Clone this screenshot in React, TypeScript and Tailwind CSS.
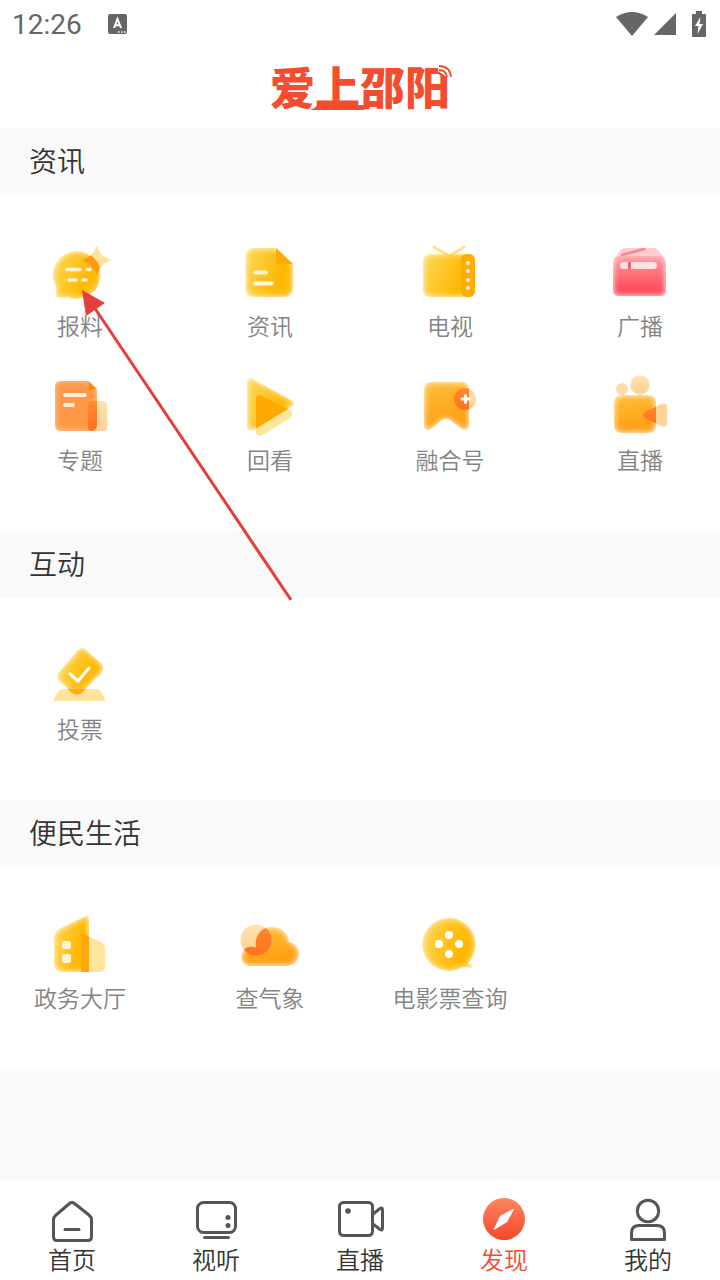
import React from 'react';

type Item = { label: string; icon: React.ReactNode };
type Section = { title: string; items: Item[] };

// Gradients and the soft edge filter shared by the channel icons
const SharedDefs = () => (
  <svg className="absolute w-0 h-0" aria-hidden="true">
    <defs>
      <linearGradient id="yellow" x1="0" y1="0" x2="1" y2="0.35">
        <stop offset="0" stopColor="#fcd95c" />
        <stop offset="0.8" stopColor="#ffb905" />
      </linearGradient>
      <linearGradient id="amber" x1="0" y1="0" x2="0.2" y2="1">
        <stop offset="0" stopColor="#ffbf3a" />
        <stop offset="0.9" stopColor="#ffa014" />
      </linearGradient>
      <linearGradient id="orange" x1="0" y1="0" x2="0" y2="1">
        <stop offset="0" stopColor="#ff9350" />
        <stop offset="1" stopColor="#ff9a42" />
      </linearGradient>
      <linearGradient id="pink" x1="0" y1="0" x2="0" y2="1">
        <stop offset="0" stopColor="#ff9a9f" />
        <stop offset="1" stopColor="#fb3f4e" />
      </linearGradient>
      <linearGradient id="peach" x1="0" y1="0" x2="0" y2="1">
        <stop offset="0" stopColor="#ffe3b0" />
        <stop offset="1" stopColor="#ffd094" />
      </linearGradient>
      <linearGradient id="deep" x1="0" y1="0" x2="0" y2="1">
        <stop offset="0" stopColor="#ff8a2a" />
        <stop offset="1" stopColor="#ff7120" />
      </linearGradient>
      <linearGradient id="active" x1="0" y1="0" x2="0" y2="1">
        <stop offset="0" stopColor="#ff8660" />
        <stop offset="1" stopColor="#f2482b" />
      </linearGradient>
      <filter id="soft" x="-10%" y="-10%" width="120%" height="120%" colorInterpolationFilters="sRGB">
        <feGaussianBlur in="SourceAlpha" stdDeviation="3" result="blur" />
        <feComposite in="SourceGraphic" in2="blur" operator="in" />
      </filter>
    </defs>
  </svg>
);

const Icon = ({ children }: { children: React.ReactNode }) => (
  <svg viewBox="0 0 72 72" className="size-[72px]" fill="none" aria-hidden="true">
    {children}
  </svg>
);

const STAR = 'M53 10C55 18 58 22 68 25C58 29 55 33 53 40C50 33 47 29 38 25C47 22 50 18 53 10Z';
const PLAY = 'M13 13C13 9 16 8 19 10L57 31C61 33 61 36 57 38L20 61C16 63 13 61 13 58Z';
const PLAY_BACK = 'M22 30C22 26 25 25 28 27L56 41C60 43 59 47 56 49L29 66C25 68 22 66 22 63Z';
const BOOKMARK = 'M17 13H48Q55 13 55 20V57C55 61 51 62 48 60L36 51Q32 48 28 51L17 60C14 62 10 61 10 57V20Q10 13 17 13Z';
const LENS = 'M41 43L57 35Q63 33 63 38V54Q63 59 57 57L41 49Q37 46 41 43Z';
const DIAMOND = 'M34 12Q38 8 42 12L57 25Q61 29 58 34L39 54Q33 59 28 55L15 43Q11 38 15 34Z';
const TOWER = 'M17 21L42 9Q45 8 45 11V65H19Q10 65 10 56V31Q10 24 17 21Z';
const ANNEX = 'M37 26L57 35Q61 37 61 41V59Q61 65 55 65H37Z';
const CLOUD = 'M16 59C4 58 5 42 15 40Q19 39 22 41C20 28 28 20 38 20C48 20 54 26 55 35C69 37 68 59 53 59Z';

const TipIcon = () => (
  <Icon>
    <clipPath id="tip-clip"><circle cx="33" cy="40" r="24" /></clipPath>
    <path d={STAR} fill="#ffe29a" />
    <path d="M33 16A24 24 0 1 1 23 62Q17 64 11 62Q13 57 12 52A24 24 0 0 1 33 16Z" fill="url(#yellow)" filter="url(#soft)" />
    <path d={STAR} fill="#ff9812" clipPath="url(#tip-clip)" />
    <path d="M23 34.5h13M43 34.5h3M25 45h7M39 45h3" stroke="#fff4da" strokeWidth="3.6" strokeLinecap="round" />
  </Icon>
);

const NewsIcon = () => (
  <Icon>
    <path d="M20 13H42L59 29V53Q59 62 50 62H20Q11.5 62 11.5 53V21Q11.5 13 20 13Z" fill="url(#yellow)" filter="url(#soft)" />
    <path d="M42 13L59 29H46Q42 29 42 25Z" fill="#ffaa08" />
    <path d="M21 37.5h11M21 48.5h17" stroke="#fff4d8" strokeWidth="4" strokeLinecap="round" />
  </Icon>
);

const TvIcon = () => (
  <Icon>
    <path d="M20 12L35 21L50 12" stroke="#ffe091" strokeWidth="3" strokeLinecap="round" />
    <rect x="9" y="19" width="52" height="43" rx="6" fill="url(#yellow)" filter="url(#soft)" />
    <rect x="47" y="19" width="14" height="43" rx="6" fill="#ffab03" />
    {[28, 36, 45, 53].map(y => <circle key={y} cx="54" cy={y} r="2" fill="#fff7e0" />)}
  </Icon>
);

const RadioIcon = () => (
  <Icon>
    <path d="M9 25L17 15Q19 13 22 13H49Q52 13 54 15L62 25Z" fill="#ffcdcf" />
    <path d="M18 20L40 14" stroke="#f6878c" strokeWidth="2.6" strokeLinecap="round" />
    <path d="M14 21H57L62 26V56Q62 61 57 61H14Q9 61 9 56V26Z" fill="url(#pink)" filter="url(#soft)" />
    <rect x="16" y="27" width="37" height="7" rx="3.5" fill="#ffe1e3" />
    <path d="M25.5 27v7" stroke="#f4525c" strokeWidth="2.6" />
  </Icon>
);

const TopicIcon = () => (
  <Icon>
    <clipPath id="topic-clip"><rect x="11" y="12" width="42" height="50" rx="6" /></clipPath>
    <rect x="44" y="32" width="19" height="30" rx="4" fill="url(#peach)" />
    <path d="M17 12H45L53 20V56Q53 62 47 62H17Q11 62 11 56V18Q11 12 17 12Z" fill="url(#orange)" filter="url(#soft)" />
    <path d="M17 12H45L53 20V56Q53 62 47 62H17Q11 62 11 56V18Q11 12 17 12Z" fill="#ff9a48" opacity="0.5" />
    <path d="M45 13L52 20H45Z" fill="#ff8300" />
    <rect x="44" y="32" width="19" height="30" rx="4" fill="url(#deep)" clipPath="url(#topic-clip)" />
    <path d="M21 26h20M21 36h8" stroke="#ffedd9" strokeWidth="3.8" strokeLinecap="round" />
  </Icon>
);

const ReplayIcon = () => (
  <Icon>
    <clipPath id="play-clip"><path d={PLAY} /></clipPath>
    <path d={PLAY_BACK} fill="#ffe59c" />
    <path d={PLAY} fill="url(#yellow)" filter="url(#soft)" />
    <path d={PLAY_BACK} fill="#ffa904" clipPath="url(#play-clip)" />
  </Icon>
);

const BookmarkIcon = () => (
  <Icon>
    <clipPath id="mark-clip"><path d={BOOKMARK} /></clipPath>
    <circle cx="51" cy="30" r="11" fill="url(#peach)" />
    <path d={BOOKMARK} fill="url(#amber)" filter="url(#soft)" />
    <circle cx="51" cy="30" r="11" fill="url(#deep)" clipPath="url(#mark-clip)" />
    <path d="M48 30h7M51.5 26.5v7" stroke="#fff" strokeWidth="3" strokeLinecap="round" />
  </Icon>
);

const LiveIcon = () => (
  <Icon>
    <clipPath id="live-clip"><rect x="10" y="26" width="42" height="38" rx="7" /></clipPath>
    <circle cx="18" cy="20" r="6" fill="#ffdba5" />
    <circle cx="36" cy="16" r="9.7" fill="url(#peach)" />
    <path d={LENS} fill="#ffd39a" />
    <rect x="10" y="26" width="42" height="38" rx="7" fill="url(#amber)" filter="url(#soft)" />
    <path d={LENS} fill="url(#deep)" clipPath="url(#live-clip)" />
  </Icon>
);

const VoteIcon = () => (
  <Icon>
    <clipPath id="vote-clip"><path d={DIAMOND} /></clipPath>
    <path d="M20 51H51Q55 51 57 54L62 63H9L14 54Q16 51 20 51Z" fill="#ffe39c" />
    <path d={DIAMOND} fill="url(#yellow)" filter="url(#soft)" />
    <path d="M9 51H62V63H9Z" fill="#ffad12" clipPath="url(#vote-clip)" />
    <path d="M26 36L34 43L45 30" stroke="#fff" strokeWidth="3" strokeLinecap="round" />
  </Icon>
);

const HallIcon = () => (
  <Icon>
    <clipPath id="hall-clip"><path d={TOWER} /></clipPath>
    <path d={ANNEX} fill="#ffe49c" />
    <path d={TOWER} fill="url(#yellow)" filter="url(#soft)" />
    <path d={ANNEX} fill="#ffa80c" clipPath="url(#hall-clip)" />
    <rect x="18" y="34" width="9" height="8" rx="2" fill="#fff3d4" />
    <rect x="18" y="47" width="9" height="9" rx="2" fill="#fff3d4" />
  </Icon>
);

const WeatherIcon = () => (
  <Icon>
    <clipPath id="cloud-clip"><path d={CLOUD} /></clipPath>
    <circle cx="22" cy="33" r="15.5" fill="url(#peach)" />
    <path d={CLOUD} fill="url(#amber)" filter="url(#soft)" />
    <circle cx="22" cy="33" r="15.5" fill="url(#deep)" clipPath="url(#cloud-clip)" />
  </Icon>
);

const MovieIcon = () => (
  <Icon>
    <path d="M35 11A26.5 26.5 0 0 1 54 56Q56 58 59 57Q59 62 56 61Q51 59 47 61A26.5 26.5 0 1 1 35 11Z" fill="url(#yellow)" filter="url(#soft)" />
    {[[35, 28], [25, 37], [45, 37], [35, 47]].map(([x, y]) => (
      <circle key={`${x}-${y}`} cx={x} cy={y} r="4" fill="#fff" />
    ))}
  </Icon>
);

const sections: Section[] = [
  {
    title: '资讯',
    items: [
      { label: '报料', icon: <TipIcon /> },
      { label: '资讯', icon: <NewsIcon /> },
      { label: '电视', icon: <TvIcon /> },
      { label: '广播', icon: <RadioIcon /> },
      { label: '专题', icon: <TopicIcon /> },
      { label: '回看', icon: <ReplayIcon /> },
      { label: '融合号', icon: <BookmarkIcon /> },
      { label: '直播', icon: <LiveIcon /> },
    ],
  },
  { title: '互动', items: [{ label: '投票', icon: <VoteIcon /> }] },
  {
    title: '便民生活',
    items: [
      { label: '政务大厅', icon: <HallIcon /> },
      { label: '查气象', icon: <WeatherIcon /> },
      { label: '电影票查询', icon: <MovieIcon /> },
    ],
  },
];

const tabs = [
  {
    label: '首页',
    icon: (
      <>
        <path d="M21.5 8.5Q24 6.5 26.5 8.5L41 20Q43.5 22 43.5 25V42Q43.5 45.5 40 45.5H9Q5.5 45.5 5.5 42V25Q5.5 22 8 20Z" />
        <path d="M17 34.5h14" />
      </>
    ),
  },
  {
    label: '视听',
    icon: (
      <>
        <rect x="5.5" y="7.5" width="38" height="30" rx="6" />
        <path d="M12.5 42.5h24" />
        <circle cx="36" cy="22.5" r="2.5" fill="#555" stroke="none" />
        <circle cx="36" cy="30.5" r="2.5" fill="#555" stroke="none" />
      </>
    ),
  },
  {
    label: '直播',
    icon: (
      <>
        <rect x="3.5" y="7.5" width="33" height="33" rx="4" />
        <path d="M37 19L44 13.5Q46.5 12 46.5 15V33Q46.5 36 44 34.5L37 29" />
        <circle cx="12" cy="16" r="2.8" fill="#555" stroke="none" />
      </>
    ),
  },
  {
    label: '发现',
    active: true,
    icon: (
      <>
        <circle cx="24" cy="24" r="21" fill="url(#active)" stroke="none" />
        <path d="M34 14.5L27 27L15 34.5Q13.5 35 14 33.5L20 21L33 14Q34.5 13.5 34 14.5Z" fill="#fff" stroke="none" />
      </>
    ),
  },
  {
    label: '我的',
    icon: (
      <>
        <circle cx="24" cy="16" r="10.7" />
        <path d="M7.5 44.5V38Q7.5 30.5 15 30.5H33Q40.5 30.5 40.5 38V44.5Z" />
      </>
    ),
  },
];

const StatusBar = () => (
  <div className="flex items-center h-12 px-3 text-[#666]">
    <span className="pt-0.5 font-['Roboto',sans-serif] text-[28px] leading-8 font-[450]">12:26</span>
    <svg viewBox="0 0 20 20" className="size-5 ml-[26px]" aria-hidden="true">
      <rect width="19" height="20" rx="2" fill="#666" />
      <path d="M6 14L9.5 5L13 14M7.2 11.2h4.6" fill="none" stroke="#fff" strokeWidth="2" />
      <path d="M10 18h1.5M13 18h1.5M16 18h1.5" stroke="#fff" strokeWidth="1.5" />
    </svg>
    <div className="ml-auto flex items-center gap-1.5 pr-0.5">
      <svg viewBox="0 0 32 24" className="w-8 h-6" fill="#666" aria-hidden="true">
        <path d="M0 5Q16 -5 32 5L16 24Z" />
      </svg>
      <svg viewBox="0 0 22 22" className="size-[22px]" fill="#666" aria-hidden="true">
        <path d="M22 0V22H0Z" />
      </svg>
      <svg viewBox="0 0 14 26" className="w-3.5 h-[26px] ml-2.5" aria-hidden="true">
        <path d="M4 0H10V3H13Q14 3 14 4V25Q14 26 13 26H1Q0 26 0 25V4Q0 3 1 3H4Z" fill="#666" />
        <path d="M8.5 6L3 15H6.5L5.5 23L11 13H7.5Z" fill="#fff" />
      </svg>
    </div>
  </div>
);

const Logo = () => (
  <h1 className="relative flex text-[45px] leading-[52px] font-black text-[#f34c2e]">
    爱上邵阳
    <svg viewBox="0 0 180 52" className="absolute inset-0 size-full overflow-visible" fill="none" aria-hidden="true">
      <path d="M40 50Q44 49 48 45H94V50Z" fill="#f34c2e" />
      <path d="M168 3H182V18H178L168 11Z" fill="#fff" />
      <path d="M169 14Q172 14 173 17M169 10Q176 10 177 17M169 6Q180 6 181 17" stroke="#f34c2e" strokeWidth="1.8" />
    </svg>
  </h1>
);

const ChannelLink = ({ item }: { item: Item }) => (
  <a href="#" className="flex flex-col items-center gap-0.5 pb-0.5 text-[23px] leading-8 font-[350] text-[#838383]">
    {item.icon}
    <span className="whitespace-nowrap">{item.label}</span>
  </a>
);

const App: React.FC = () => {
  return (
    <div className="relative flex min-h-screen flex-col bg-[#f9f9f9] font-['Noto_Sans_CJK_SC',sans-serif] text-[#333]">
      <SharedDefs />
      <header className="bg-white">
        <StatusBar />
        <div className="flex justify-center pt-3 pb-4">
          <Logo />
        </div>
      </header>

      <main className="flex-1">
        {sections.map(section => (
          <section key={section.title}>
            <h2 className="px-[29px] pt-3 pb-[15px] text-[28px] leading-10 font-[350]">{section.title}</h2>
            <div className="grid grid-cols-4 gap-y-[26px] bg-white pt-10 pb-[54px] [&>*:nth-child(4n+1)]:pr-5 [&>*:nth-child(4n)]:pl-5">
              {section.items.map(item => <ChannelLink key={item.label} item={item} />)}
            </div>
          </section>
        ))}
      </main>

      <nav className="grid grid-cols-5 bg-white pt-[15px] pb-[5px]">
        {tabs.map(tab => (
          <a
            key={tab.label}
            href="#"
            className={`flex flex-col items-center text-2xl leading-8 font-[350] ${tab.active ? 'text-[#f34c2e]' : 'text-[#333]'}`}
          >
            <svg viewBox="0 0 48 48" className="size-12" fill="none" stroke="#555" strokeWidth="3" strokeLinecap="round" strokeLinejoin="round" aria-hidden="true">
              {tab.icon}
            </svg>
            {tab.label}
          </a>
        ))}
      </nav>

      {/* pointer to the tip-off channel */}
      <svg viewBox="0 0 212 312" className="pointer-events-none absolute left-20 top-[290px] w-[212px] h-[312px]" aria-hidden="true">
        <path d="M14 17L211 310" stroke="#e23e3e" strokeWidth="3" />
        <path d="M2 0L25 13L6 26Z" fill="#e23e3e" />
      </svg>
    </div>
  );
};

export default App;
